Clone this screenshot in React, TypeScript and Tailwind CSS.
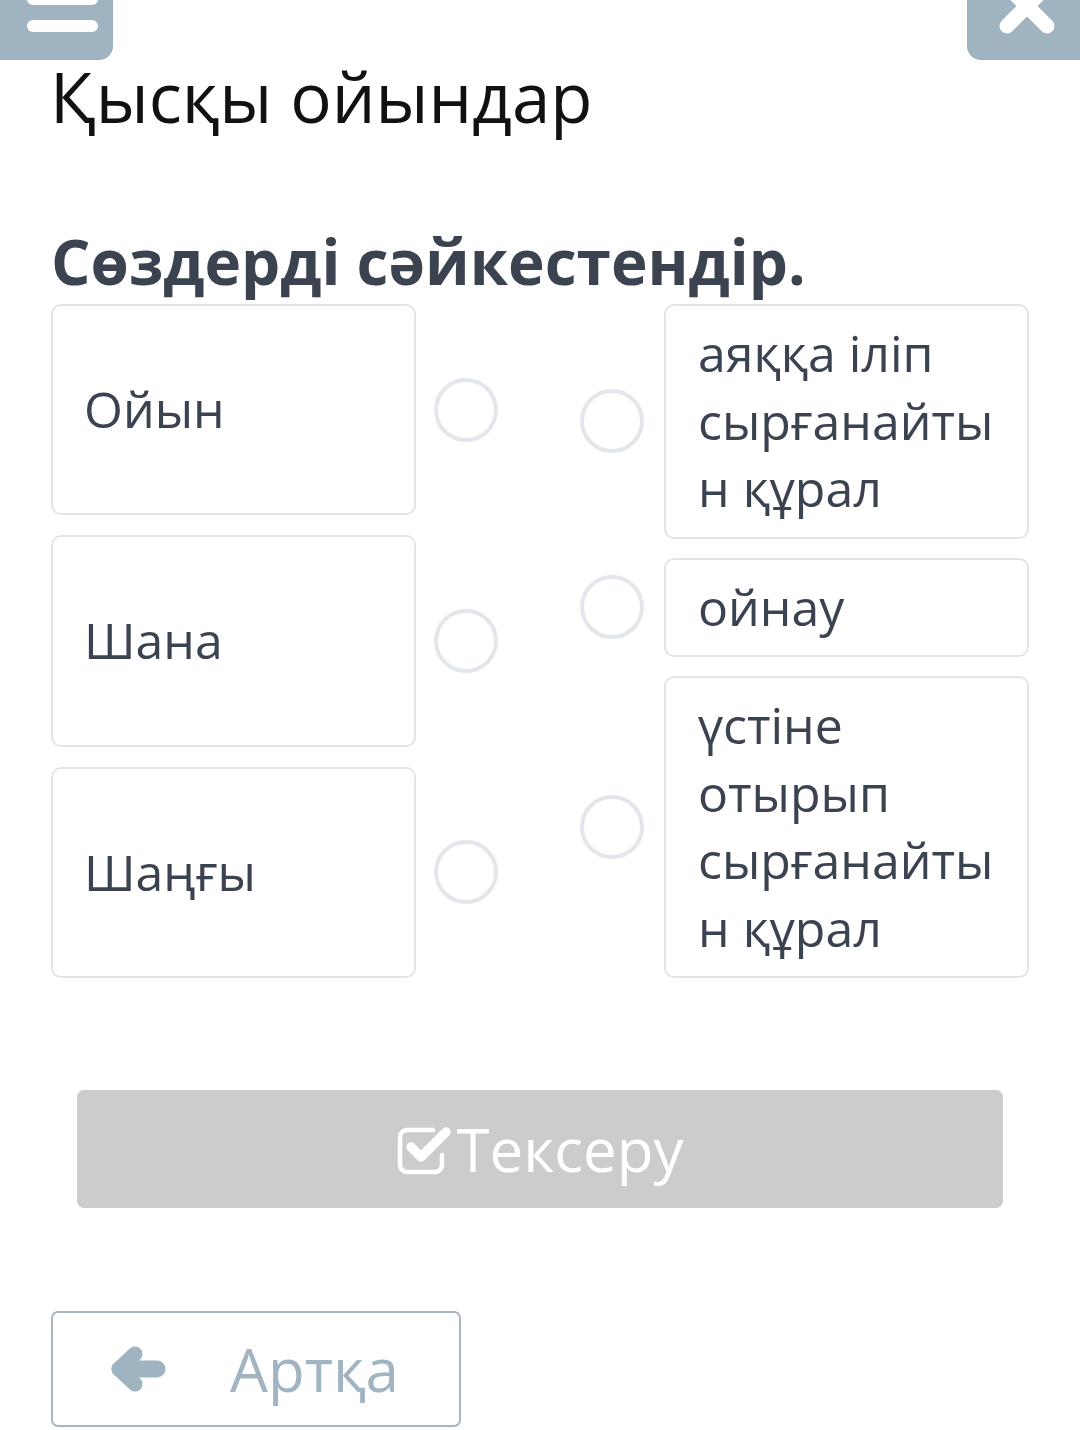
import React from "react";

const Circle = () => (
  <div className="w-16 h-16 shrink-0 rounded-full border-4 border-[#e3e7eb] bg-white" />
);

const leftItems = ["Ойын", "Шана", "Шаңғы"];
const rightItems = [
  "аяққа іліп сырғанайтын құрал",
  "ойнау",
  "үстіне отырып сырғанайтын құрал",
];

export default function App() {
  return (
    <div className="w-[1080px] h-[1430px] bg-white overflow-hidden font-['Open_Sans',_'Noto_Sans',_sans-serif]">
      {/* header */}
      <div className="flex justify-between h-[60px]">
        <div className="w-[113px] h-[60px] bg-[#a0b3c0] rounded-br-[14px]">
          <svg width="113" height="60" viewBox="0 0 113 60">
            <rect x="27" y="-7" width="71" height="12" rx="6" fill="#fff" />
            <rect x="27" y="20" width="71" height="12" rx="6" fill="#fff" />
          </svg>
        </div>
        <div className="w-[113px] h-[60px] bg-[#a0b3c0] rounded-bl-[14px]">
          <svg width="113" height="60" viewBox="0 0 113 60">
            <path
              d="M40 26 L80 -14 M80 26 L40 -14"
              stroke="#fff"
              strokeWidth="15"
              strokeLinecap="round"
              fill="none"
            />
          </svg>
        </div>
      </div>

      {/* title */}
      <h1 className="mt-[2px] px-[50px] text-[69px] leading-none font-normal text-[#111]">
        Қысқы ойындар
      </h1>

      <h2 className="mt-[99px] px-[51px] text-[62px] leading-none font-bold text-[#3c4350]">
        Сөздерді сәйкестендір.
      </h2>

      {/* matching area */}
      <div className="mt-[12px] px-[51px] flex justify-between items-stretch">
        <div className="flex flex-col gap-5">
          {leftItems.map((t) => (
            <div key={t} className="flex-1 flex items-center">
              <div className="w-[365px] self-stretch flex items-center pl-[31px] border-2 border-[#e4e4e4] rounded-[10px] text-[50px] leading-[1.35] text-[#3c4350]">
                {t}
              </div>
              <div className="ml-[18px]">
                <Circle />
              </div>
            </div>
          ))}
        </div>
        <div className="flex flex-col gap-[19px]">
          {rightItems.map((t) => (
            <div key={t} className="flex items-center">
              <Circle />
              <div className="ml-[20px] w-[365px] pl-[32px] pr-[14px] py-[14px] border-2 border-[#e4e4e4] rounded-[10px] text-[50px] leading-[1.35] text-[#3c4350] break-words">
                {t}
              </div>
            </div>
          ))}
        </div>
      </div>

      {/* check button */}
      <div className="mt-[112px] mx-[77px] h-[118px] bg-[#cccccc] rounded-[7px] flex items-center justify-center">
        <svg width="56" height="52" viewBox="0 0 56 52" className="mr-[4px]">
          <path
            d="M36 7 H10 a7 7 0 0 0 -7 7 V42 a7 7 0 0 0 7 7 H38 a7 7 0 0 0 7 -7 V32"
            stroke="#fff"
            strokeWidth="4.5"
            fill="none"
            strokeLinecap="round"
          />
          <path
            d="M14 24 L24 34 L49 9"
            stroke="#fff"
            strokeWidth="9.5"
            fill="none"
            strokeLinecap="round"
            strokeLinejoin="round"
          />
        </svg>
        <span className="text-[60px] leading-none text-white">Тексеру</span>
      </div>

      {/* back button */}
      <div className="mt-[103px] ml-[51px] w-[410px] h-[116px] border-2 border-[#a9b6bd] rounded-[7px] flex items-center pl-[57px]">
        <svg width="56" height="46" viewBox="0 0 56 46">
          <path
            d="M10 23 H47"
            stroke="#9fb3c0"
            strokeWidth="17"
            strokeLinecap="round"
          />
          <path
            d="M25 8 L9 23 L25 38"
            stroke="#9fb3c0"
            strokeWidth="15"
            strokeLinecap="round"
            strokeLinejoin="round"
            fill="none"
          />
        </svg>
        <span className="ml-[64px] text-[60px] leading-none text-[#a0b4c1]">Артқа</span>
      </div>
    </div>
  );
}
